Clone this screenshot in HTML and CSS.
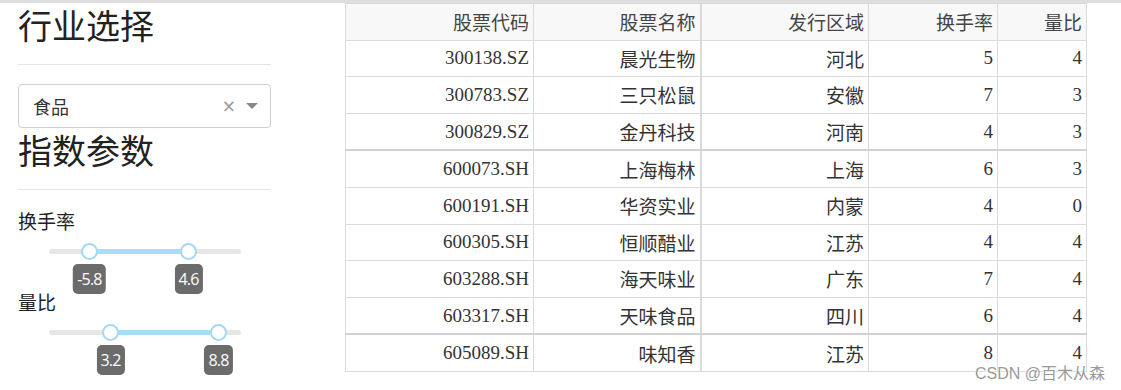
FILE: index.html
```html
<!DOCTYPE html>
<html lang="zh">
<head>
<meta charset="utf-8">
<title>行业选择</title>
<link rel="stylesheet" href="styles.css">
</head>
<body>
<div class="page">
  <aside class="sidebar">
    <h2 class="panel-title">行业选择</h2>
    <hr class="rule">
    <div class="select">
      <span class="select-value">食品</span>
      <span class="select-clear">×</span>
      <span class="select-caret"></span>
    </div>
    <h2 class="panel-title second">指数参数</h2>
    <hr class="rule">

    <div class="field">
      <label class="field-label">换手率</label>
      <div class="range">
        <div class="track">
          <div class="fill" style="left:20.8%;width:51.6%"></div>
          <div class="knob" style="left:20.8%"><span class="tip">-5.8</span></div>
          <div class="knob" style="left:72.4%"><span class="tip">4.6</span></div>
        </div>
      </div>
    </div>

    <div class="field field-b">
      <label class="field-label">量比</label>
      <div class="range">
        <div class="track">
          <div class="fill" style="left:31.8%;width:56.2%"></div>
          <div class="knob" style="left:31.8%"><span class="tip">3.2</span></div>
          <div class="knob" style="left:88%"><span class="tip">8.8</span></div>
        </div>
      </div>
    </div>
  </aside>

  <main class="content">
    <table class="grid">
      <colgroup>
        <col class="c1"><col class="c2"><col class="c3"><col class="c4"><col class="c5">
      </colgroup>
      <thead>
        <tr><th>股票代码</th><th class="split">股票名称</th><th>发行区域</th><th>换手率</th><th>量比</th></tr>
      </thead>
      <tbody>
        <tr><td>300138.SZ</td><td class="split">晨光生物</td><td>河北</td><td>5</td><td>4</td></tr>
        <tr><td>300783.SZ</td><td class="split">三只松鼠</td><td>安徽</td><td>7</td><td>3</td></tr>
        <tr class="group-end"><td>300829.SZ</td><td class="split">金丹科技</td><td>河南</td><td>4</td><td>3</td></tr>
        <tr><td>600073.SH</td><td class="split">上海梅林</td><td>上海</td><td>6</td><td>3</td></tr>
        <tr><td>600191.SH</td><td class="split">华资实业</td><td>内蒙</td><td>4</td><td>0</td></tr>
        <tr><td>600305.SH</td><td class="split">恒顺醋业</td><td>江苏</td><td>4</td><td>4</td></tr>
        <tr><td>603288.SH</td><td class="split">海天味业</td><td>广东</td><td>7</td><td>4</td></tr>
        <tr class="group-end"><td>603317.SH</td><td class="split">天味食品</td><td>四川</td><td>6</td><td>4</td></tr>
        <tr><td>605089.SH</td><td class="split">味知香</td><td>江苏</td><td>8</td><td>4</td></tr>
      </tbody>
    </table>
  </main>
</div>
<div class="watermark">CSDN @百木从森</div>
</body>
</html>
```

FILE: styles.css
```css
html, body {
  margin: 0;
  padding: 0;
  background: #fff;
}

body {
  border-top: 3px solid #dedede;
  font-family: "Noto Sans CJK SC", "Noto Sans", sans-serif;
  color: #333;
  position: relative;
  height: 387px;
  overflow: hidden;
}

.page {
  display: flex;
  align-items: flex-start;
}

/* ---------- sidebar ---------- */
.sidebar {
  width: 253px;
  margin-left: 18px;
  flex: none;
}

.panel-title {
  margin: 0;
  font-size: 34px;
  font-weight: 400;
  line-height: 44px;
  color: #222;
}

.rule {
  border: 0;
  border-top: 1px solid #e4e4e4;
  margin: 17px 0 19px;
}

.select {
  height: 42px;
  border: 1px solid #cfcfcf;
  border-radius: 4px;
  display: flex;
  align-items: center;
  padding: 0 12px 0 14px;
}

.select-value {
  flex: 1;
  font-size: 18px;
  color: #333;
}

.select-clear {
  font-family: "DejaVu Sans", sans-serif;
  font-size: 17px;
  color: #999;
  margin-right: 10px;
}

.select-caret {
  width: 0;
  height: 0;
  border-left: 6px solid transparent;
  border-right: 6px solid transparent;
  border-top: 6px solid #888;
}

.field-label {
  display: block;
  font-size: 19px;
  line-height: 24px;
  color: #222;
}

.field {
  margin-top: 18px;
}

.field-b {
  margin-top: -7px;
}

.range {
  padding: 0 30px 0 31px;
  height: 64px;
}

.track {
  position: relative;
  top: 16px;
  height: 5px;
  border-radius: 3px;
  background: #e6e6e6;
}

.fill {
  position: absolute;
  top: 0;
  height: 5px;
  background: #a8dcf8;
}

.knob {
  position: absolute;
  top: -6px;
  width: 13px;
  height: 13px;
  margin-left: -8px;
  border: 2px solid #a3d9f7;
  border-radius: 50%;
  background: #fff;
}

.tip {
  position: absolute;
  top: 19px;
  left: 50%;
  transform: translateX(-50%);
  min-width: 20px;
  height: 30px;
  padding: 0 4px;
  border-radius: 5px;
  background: #6b6b6b;
  color: #fff;
  font-family: "Open Sans", "Liberation Sans", sans-serif;
  font-size: 16px;
  line-height: 30px;
  text-align: center;
  letter-spacing: -0.8px;
}

/* ---------- table ---------- */
.content {
  margin-left: 74px;
}

.grid {
  border-collapse: collapse;
  width: 741px;
  table-layout: fixed;
  font-family: "Liberation Serif", "Noto Sans CJK SC", serif;
  font-size: 19px;
  color: #333;
}

.c1 { width: 188px; }
.c2 { width: 167px; }
.c3 { width: 168px; }
.c4 { width: 129px; }
.c5 { width: 89px; }

.grid th,
.grid td {
  border: 1px solid #dadada;
  text-align: right;
  padding: 0 4px 0 0;
  height: 35.6px;
  font-weight: 400;
  white-space: nowrap;
}

.grid th {
  background: #f8f8f8;
  color: #444;
}

.grid .split {
  border-right-width: 2px;
}

.grid tr.group-end td {
  border-bottom: 2px solid #d2d2d2;
}

.watermark {
  position: absolute;
  right: 16px;
  bottom: 6px;
  font-family: "Liberation Sans", "Noto Sans CJK SC", sans-serif;
  font-size: 16px;
  color: #9a9a9a;
  text-shadow: 0 0 2px #fff, 0 0 2px #fff;
}
```
